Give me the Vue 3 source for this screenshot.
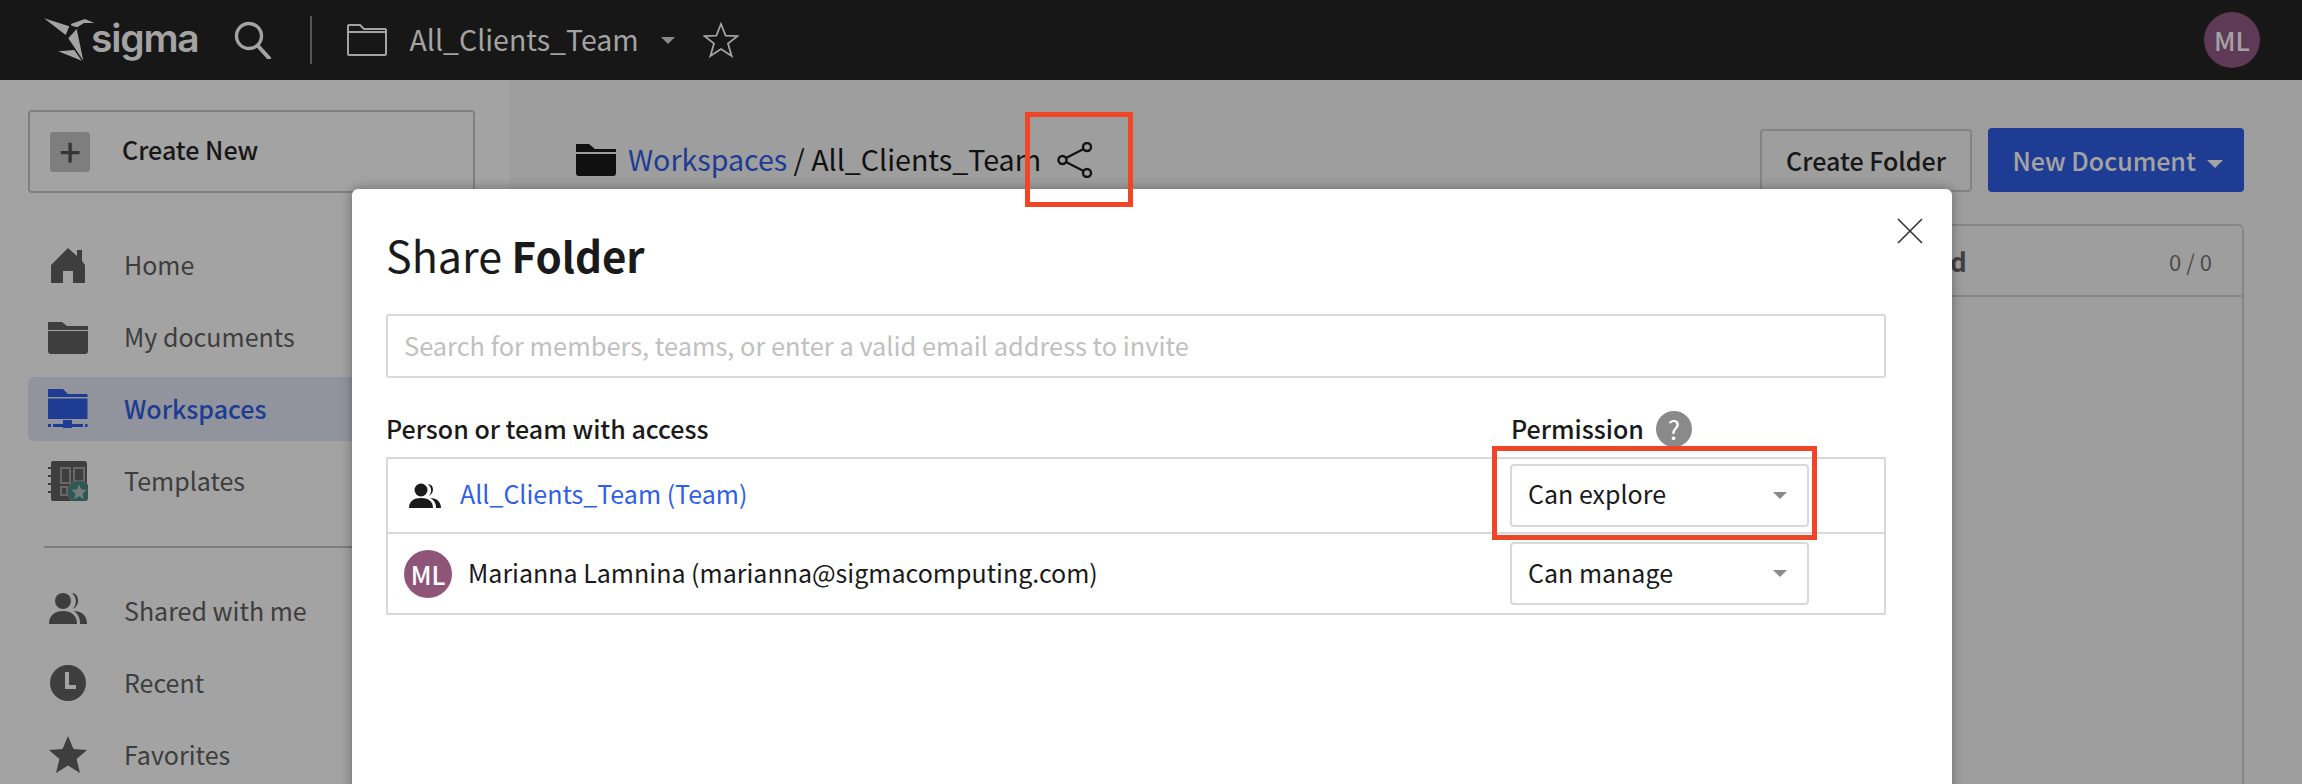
<script setup>
const topItems = [
  { label: 'Home', icon: 'home' },
  { label: 'My documents', icon: 'folder' },
  { label: 'Workspaces', icon: 'workspace', active: true },
  { label: 'Templates', icon: 'templates' }
]
const bottomItems = [
  { label: 'Shared with me', icon: 'people' },
  { label: 'Recent', icon: 'clock' },
  { label: 'Favorites', icon: 'star' }
]
const members = [
  { kind: 'team', name: 'All_Clients_Team (Team)', permission: 'Can explore' },
  { kind: 'user', name: 'Marianna Lamnina (marianna@sigmacomputing.com)', permission: 'Can manage' }
]
</script>

<template>
  <div class="page">
    <header class="topbar">
      <svg class="logo-mark" viewBox="0 0 51 44" fill="#a3a3a3">
        <path d="M0 0.3 L25.3 8.3 L21.7 17 Z" />
        <path d="M24.3 20.3 L32.7 11 L39.3 42.7 Z" />
        <path d="M26.7 6 L41 1 L50.3 5 L40 5 L33.3 9.3 L27.7 7.7 Z" />
        <path d="M14.3 33.3 L30.3 32 L37.7 42.7 Z" />
      </svg>
      <span class="logo-text">sigma</span>
      <svg class="search" viewBox="0 0 38 38" fill="none" stroke="#a3a3a3" stroke-width="3.4">
        <circle cx="15" cy="15" r="12.5" />
        <path d="M24 25 L35 37" stroke-linecap="round" stroke-width="4" />
      </svg>
      <div class="top-divider"></div>
      <svg class="top-folder" viewBox="0 0 40 32" fill="none" stroke="#a3a3a3" stroke-width="2">
        <path d="M1 30 V2 Q1 1 2 1 H13 L17 5 H38 Q39 5 39 6 V30 Q39 31 38 31 H2 Q1 31 1 30 Z" />
        <path d="M1 8 H39" />
      </svg>
      <span class="top-title">All_Clients_Team</span>
      <span class="caret top-caret"></span>
      <svg class="top-star" viewBox="0 0 36 36" fill="none" stroke="#a3a3a3" stroke-width="1.8">
        <path d="M18 2 L22.6 13.6 L34.6 14 L25 21.6 L28.6 34 L18 27 L7.4 34 L11 21.6 L1.4 14 L13.4 13.6 Z" />
      </svg>
      <div class="top-avatar">ML</div>
    </header>

    <div class="body">
      <aside class="sidebar">
        <button class="create-new">
          <span class="plus">+</span>
          <span class="create-label">Create New</span>
        </button>
        <nav class="nav">
          <div v-for="item in topItems" :key="item.label" class="nav-item" :class="{ active: item.active }">
            <svg class="nav-icon" viewBox="0 0 40 40" fill="currentColor">
              <path v-if="item.icon === 'home'" d="M3 38 V20 L20 3 L29 11 V5 L34 5 V16 L37 20 V38 H25 V26 H15 V38 Z" />
              <path v-if="item.icon === 'folder'" d="M0 5 H14 L19 9 H40 V13 H0 Z M0 14 H40 V34 Q40 37 37 37 H3 Q0 37 0 34 Z" />
              <template v-if="item.icon === 'workspace'">
                <path d="M0 0 H15 L20 5 H39.5 V8 H0 Z M0 9.5 H39.5 V30 H0 Z" />
                <path d="M15 31 H24 V39 H15 Z M0 35 H3 V38 H0 Z M5 35 H35 V38 H5 Z M37 35 H39.5 V38 H37 Z" />
              </template>
              <template v-if="item.icon === 'templates'">
                <path d="M3 2 Q3 0 5 0 H36 Q39 0 39 3 V40 H5 Q3 40 3 38 Z" />
                <path d="M0 6 H3 V8 H0 Z M0 14 H3 V16 H0 Z M0 22 H3 V24 H0 Z M0 30 H3 V32 H0 Z" />
                <path d="M13 7 H22 V22 H13 Z M26 7 H36 V20 H26 Z M13 26 H19 V34 H13 Z" fill="none" stroke="#a3a3a3" stroke-width="2" />
                <circle cx="31" cy="31" r="11.5" fill="#4a8a86" stroke="#8c9a98" stroke-width="1" />
                <path d="M31 23.5 L33.2 28.6 L38.6 29 L34.5 32.6 L35.8 38 L31 35.2 L26.2 38 L27.5 32.6 L23.4 29 L28.8 28.6 Z" fill="#b3c4c2" />
              </template>
            </svg>
            <span class="nav-label">{{ item.label }}</span>
          </div>
        </nav>
        <div class="side-divider"></div>
        <nav class="nav">
          <div v-for="item in bottomItems" :key="item.label" class="nav-item">
            <svg class="nav-icon" viewBox="0 0 40 40" fill="currentColor">
              <template v-if="item.icon === 'people'">
                <circle cx="15" cy="10" r="8" />
                <path d="M1 33 C1 24 7 20 15 20 C23 20 29 24 29 33 Z" />
                <path d="M24 2 C31 2 33 14 25 18 C29 12 29 7 24 2 Z M26 20 C34 20 39 25 39 33 H32 C32 27 30 23 26 20 Z" />
              </template>
              <template v-if="item.icon === 'clock'">
                <circle cx="20" cy="20" r="18" />
                <path d="M17 9 H21 V22 H28 V26 H17 Z" fill="#fff" />
              </template>
              <path v-if="item.icon === 'star'" d="M20 1 L25.5 14 L39 15 L28.6 24 L32 38 L20 30.6 L8 38 L11.4 24 L1 15 L14.5 14 Z" />
            </svg>
            <span class="nav-label">{{ item.label }}</span>
          </div>
        </nav>
      </aside>

      <main class="content">
        <div class="content-head">
          <svg class="crumb-folder" viewBox="0 0 40 32" fill="#1a1a1a">
            <path d="M0 0 H13 L19 5 H40 V8 H0 Z M0 10 H40 V29 Q40 32 37 32 H3 Q0 32 0 29 Z" />
          </svg>
          <span class="crumb"><span class="crumb-link">Workspaces</span> / All_Clients_Team</span>
          <svg class="share" viewBox="0 0 36 36" fill="none" stroke="#1f1f1f" stroke-width="2.4">
            <circle cx="5.5" cy="18" r="4" />
            <circle cx="30" cy="5" r="4" />
            <circle cx="30" cy="31" r="4" />
            <path d="M9 16 L26.5 7 M9 20 L26.5 29" />
          </svg>
          <button class="create-folder">Create Folder</button>
          <button class="new-doc">New Document <span class="caret doc-caret"></span></button>
        </div>
        <section class="panel">
          <div class="panel-head">
            <span class="panel-title">d</span>
            <span class="panel-count">0 / 0</span>
          </div>
        </section>
      </main>
    </div>

    <div class="overlay"></div>

    <div class="modal">
      <svg class="close" viewBox="0 0 26 26" fill="none" stroke="#333" stroke-width="1.6">
        <path d="M1 1 L25 25 M25 1 L1 25" />
      </svg>
      <h1 class="modal-title">Share <b>Folder</b></h1>
      <div class="invite">Search for members, teams, or enter a valid email address to invite</div>
      <div class="labels">
        <span class="label-person">Person or team with access</span>
        <span class="label-perm">Permission</span>
        <span class="help">?</span>
      </div>
      <div class="members">
        <div v-for="m in members" :key="m.name" class="member" :class="m.kind">
          <svg v-if="m.kind === 'team'" class="team-icon" viewBox="0 0 34 26" fill="#1a1a1a">
            <circle cx="13" cy="7" r="6.5" />
            <path d="M1 25 C1 18 6 15 13 15 C20 15 25 18 25 25 Z" />
            <path d="M20 1 C26 1 27 10 21 13 C24 9 24 5 20 1 Z M22 15 C29 15 33 19 33 25 H28 C28 20 26 17 22 15 Z" />
          </svg>
          <div v-else class="member-avatar">ML</div>
          <span class="member-name">{{ m.name }}</span>
          <div class="select">
            <span class="select-label">{{ m.permission }}</span>
            <span class="caret select-caret"></span>
          </div>
        </div>
      </div>
    </div>

    <div class="callout callout-share"></div>
    <div class="callout callout-select"></div>
  </div>
</template>

<style scoped>
.page {
  position: relative;
  width: 2302px;
  height: 784px;
  overflow: hidden;
  background: #fff;
  font-family: "Noto Sans CJK SC", "Noto Sans", sans-serif;
  color: #1a1a1a;
  font-size: 25px;
  line-height: 36px;
}

button {
  font-family: inherit;
  line-height: 36px;
}

.topbar {
  height: 80px;
  background: #171717;
  display: flex;
  align-items: center;
  padding-left: 44px;
  box-sizing: border-box;
  color: #a3a3a3;
  position: relative;
  z-index: 1;
}

.logo-mark {
  width: 51px;
  height: 44px;
  flex: none;
}

.logo-text {
  font-family: Inter, sans-serif;
  font-size: 39px;
  font-weight: 600;
  margin-left: -4px;
  margin-bottom: 4px;
  letter-spacing: -1.2px;
}

.search {
  width: 38px;
  height: 38px;
  margin-left: 35px;
}

.top-divider {
  width: 2px;
  height: 48px;
  background: #555;
  margin-left: 38px;
}

.top-folder {
  width: 40px;
  height: 32px;
  margin-left: 35px;
}

.top-title {
  font-size: 28.5px;
  margin-left: 23px;
  padding-bottom: 2px;
}

.caret {
  display: inline-block;
  width: 0;
  height: 0;
  border-left: 7px solid transparent;
  border-right: 7px solid transparent;
  border-top: 7px solid #8a8a8a;
}

.top-caret {
  margin-left: 22px;
}

.top-star {
  width: 36px;
  height: 36px;
  margin-left: 28px;
}

.top-avatar {
  width: 56px;
  height: 56px;
  border-radius: 50%;
  background: #5f3a57;
  margin-left: auto;
  margin-right: 42px;
  font-size: 26px;
  font-weight: 500;
  display: flex;
  align-items: center;
  justify-content: center;
  color: #a3a3a3;
}

.body {
  display: flex;
  height: 704px;
}

.sidebar {
  width: 509px;
  flex: none;
  background: #fff;
  box-sizing: border-box;
  padding: 30px 0 0 28px;
}

.create-new {
  width: 447px;
  height: 83px;
  box-sizing: border-box;
  border: 2px solid #c8c8c8;
  border-radius: 4px;
  background: #fff;
  display: flex;
  align-items: center;
  padding: 0 0 0 20px;
  font-size: 25px;
  font-weight: 500;
  color: #262626;
}

.create-label {
  padding-bottom: 6px;
}

.plus {
  width: 40px;
  height: 40px;
  border-radius: 3px;
  background: #c6c6c6;
  color: #555;
  font-size: 38px;
  line-height: 38px;
  text-align: center;
  margin-right: 32px;
}

.nav {
  display: flex;
  flex-direction: column;
  gap: 8px;
}

.sidebar > .nav:first-of-type {
  margin-top: 40px;
}

.nav-item {
  height: 64px;
  display: flex;
  align-items: center;
  padding-left: 20px;
  border-radius: 6px 0 0 6px;
  color: #616161;
}

.nav-item.active {
  background: #e3e8f4;
  color: #2f5ee8;
  font-weight: 500;
}

.nav-icon {
  width: 40px;
  height: 40px;
  margin-right: 36px;
  flex: none;
}

.nav-label {
  padding-bottom: 2px;
}

.side-divider {
  height: 2px;
  background: #c4c4c4;
  margin: 33px 0 31px 16px;
}

.content {
  flex: 1;
  background: #f7f7f7;
  padding: 48px 58px 0 67px;
  min-width: 0;
}

.content-head {
  display: flex;
  align-items: center;
  height: 64px;
}

.crumb-folder {
  width: 40px;
  height: 32px;
  margin-right: 12px;
}

.crumb {
  font-size: 28.6px;
  padding-bottom: 2px;
}

.crumb-link {
  color: #2f5ee8;
}

.share {
  width: 36px;
  height: 36px;
  margin-left: 16px;
}

.create-folder {
  margin-left: auto;
  width: 212px;
  height: 63px;
  border: 2px solid #cfcfcf;
  border-radius: 4px;
  background: #f7f7f7;
  font-size: 25px;
  font-weight: 500;
  color: #262626;
}

.new-doc {
  margin-left: 16px;
  width: 256px;
  height: 64px;
  border: 0;
  border-radius: 4px;
  background: #2f5ee8;
  color: #fff;
  font-size: 25px;
  font-weight: 500;
  padding: 0 0 0 4px;
}

.doc-caret {
  border-left-width: 8px;
  border-right-width: 8px;
  border-top: 8px solid #fff;
  vertical-align: middle;
  margin-left: 6px;
}

.panel {
  margin-top: 32px;
  height: 620px;
  border: 2px solid #d4d4d4;
  border-radius: 6px;
  box-sizing: border-box;
}

.panel-head {
  height: 69px;
  border-bottom: 2px solid #d4d4d4;
  display: flex;
  align-items: center;
  justify-content: space-between;
  padding: 0 30px 0 1372px;
  color: #666;
}

.panel-title {
  font-weight: 700;
  font-size: 26px;
}

.panel-count {
  font-size: 22px;
  color: #777;
}

.overlay {
  position: absolute;
  inset: 0;
  background: rgba(0, 0, 0, 0.36);
}

.modal {
  position: absolute;
  left: 352px;
  top: 189px;
  width: 1600px;
  height: 640px;
  background: #fff;
  border-radius: 6px;
  box-shadow: 0 0 12px rgba(0, 0, 0, 0.35);
  box-sizing: border-box;
  padding: 33px 66px 0 34px;
}

.close {
  position: absolute;
  right: 29px;
  top: 29px;
  width: 26px;
  height: 26px;
}

.modal-title {
  margin: 0;
  font-size: 43px;
  line-height: 64px;
  font-weight: 400;
}

.modal-title b {
  font-weight: 700;
  font-size: 42px;
}

.invite {
  margin-top: 27px;
  height: 64px;
  border: 2px solid #d9d9d9;
  border-radius: 3px;
  box-sizing: border-box;
  padding: 0 16px 2px;
  display: flex;
  align-items: center;
  color: #c0c0c0;
  font-size: 25.4px;
}

.labels {
  margin-top: 33px;
  height: 36px;
  display: flex;
  align-items: center;
  font-weight: 500;
  font-size: 25px;
}

.label-person {
  width: 1125px;
  padding-bottom: 2px;
}

.label-perm {
  padding-bottom: 2px;
}

.help {
  width: 36px;
  height: 36px;
  border-radius: 50%;
  background: #8a8a8a;
  color: #fff;
  font-size: 26px;
  font-weight: 400;
  text-align: center;
  margin-left: 12px;
}

.members {
  margin-top: 10px;
  border: 2px solid #d9d9d9;
}

.member {
  display: flex;
  align-items: center;
  padding-left: 16px;
}

.member.team {
  height: 73px;
  border-bottom: 2px solid #d9d9d9;
  padding-left: 20px;
}

.member.user {
  height: 79px;
}

.team-icon {
  width: 34px;
  height: 26px;
  margin-right: 18px;
}

.member-name,
.select-label {
  padding-bottom: 4px;
}

.team .member-name,
.team .select-label {
  padding-bottom: 6px;
}

.team .member-name {
  color: #2f5ee8;
}

.member-avatar {
  width: 48px;
  height: 48px;
  border-radius: 50%;
  background: #8e5579;
  color: #fff;
  font-weight: 500;
  display: flex;
  align-items: center;
  justify-content: center;
  margin-right: 16px;
}

.select {
  position: relative;
  margin-left: auto;
  margin-right: 75px;
  width: 299px;
  height: 63px;
  box-sizing: border-box;
  border: 2px solid #d9d9d9;
  border-radius: 4px;
  display: flex;
  align-items: center;
  justify-content: space-between;
  padding: 0 20px 0 16px;
  background: #fff;
}

.select-caret {
  border-top-color: #8a8a8a;
}

.callout {
  position: absolute;
  border: 5px solid #ef4627;
  box-sizing: border-box;
}

.callout-share {
  left: 1025px;
  top: 112px;
  width: 108px;
  height: 95px;
}

.callout-select {
  left: 1492px;
  top: 446px;
  width: 325px;
  height: 94px;
}
</style>
